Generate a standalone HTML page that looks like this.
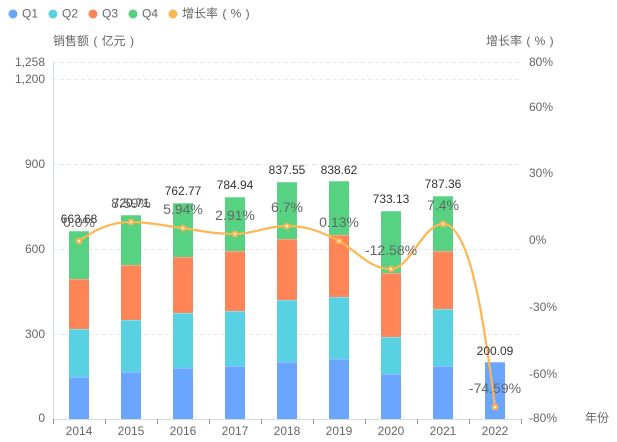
<!DOCTYPE html>
<html>
<head>
<meta charset="utf-8">
<style>
html,body{margin:0;padding:0;background:#fff;width:617px;height:442px;overflow:hidden}
svg{display:block}
text{font-family:"Liberation Sans","Noto Sans CJK SC",sans-serif;font-size:12px;fill:#666;white-space:pre}
.cn{font-family:"Liberation Sans","Noto Sans CJK SC",sans-serif;word-spacing:1px}
.v{fill:#333;text-anchor:middle}
.p{font-size:14px;fill:#666;text-anchor:middle}
.x{text-anchor:middle}
.r{text-anchor:end}
</style>
</head>
<body>
<svg width="617" height="442" viewBox="0 0 617 442" xmlns="http://www.w3.org/2000/svg">
<!-- legend -->
<circle cx="13" cy="14" r="4.5" fill="#6aa5ff"/><text x="22" y="17.5">Q1</text>
<circle cx="53" cy="14" r="4.5" fill="#58d2e2"/><text x="62" y="17.5">Q2</text>
<circle cx="93" cy="14" r="4.5" fill="#ff8559"/><text x="102" y="17.5">Q3</text>
<circle cx="133" cy="14" r="4.5" fill="#57d283"/><text x="142" y="17.5">Q4</text>
<circle cx="173" cy="14" r="4.5" fill="#ffb552"/><text x="182" y="17.5" class="cn">增长率 ( % )</text>
<text x="53" y="45" class="cn">销售额 ( 亿元 )</text>
<text x="486" y="45" class="cn">增长率 ( % )</text>
<!-- grid -->
<g stroke="#e4e6f0" stroke-width="1" stroke-dasharray="4 3" fill="none">
<path d="M53 62.5H520"/><path d="M53 79.5H520"/><path d="M53 164.5H520"/><path d="M53 249.5H520"/><path d="M53 334.5H520"/>
</g>
<!-- y axis -->
<path d="M53.5 62V419" stroke="#d3dedc" stroke-width="1"/>
<path d="M53 419.5H521" stroke="#d3dedc" stroke-width="1"/>
<g stroke="#999" stroke-width="1"><path d="M53.5 419V424M105.5 419V424M157.5 419V424M209.5 419V424M261.5 419V424M313.5 419V424M365.5 419V424M417.5 419V424M469.5 419V424M521.5 419V424"/></g>
<!-- left labels -->
<g class="r">
<text x="45" y="66" class="r">1,258</text>
<text x="45" y="83" class="r">1,200</text>
<text x="45" y="168" class="r">900</text>
<text x="45" y="253" class="r">600</text>
<text x="45" y="338" class="r">300</text>
<text x="45" y="422" class="r">0</text>
</g>
<!-- right labels -->
<text x="529" y="66">80%</text>
<text x="529" y="111">60%</text>
<text x="529" y="177">30%</text>
<text x="529" y="244">0%</text>
<text x="529" y="311">-30%</text>
<text x="529" y="378">-60%</text>
<text x="529" y="422">-80%</text>
<text x="585" y="422" class="cn">年份</text>
<!-- x labels -->
<text x="79" y="435" class="x">2014</text>
<text x="131" y="435" class="x">2015</text>
<text x="183" y="435" class="x">2016</text>
<text x="235" y="435" class="x">2017</text>
<text x="287" y="435" class="x">2018</text>
<text x="339" y="435" class="x">2019</text>
<text x="391" y="435" class="x">2020</text>
<text x="443" y="435" class="x">2021</text>
<text x="495" y="435" class="x">2022</text>
<!-- bars -->
<g>
<rect x="69" y="377" width="20" height="42" fill="#6aa5ff"/><rect x="69" y="329" width="20" height="48" fill="#58d2e2"/><rect x="69" y="279" width="20" height="50" fill="#ff8559"/><rect x="69" y="231" width="20" height="48" fill="#57d283"/>
<rect x="121" y="372" width="20" height="47" fill="#6aa5ff"/><rect x="121" y="320" width="20" height="52" fill="#58d2e2"/><rect x="121" y="265" width="20" height="55" fill="#ff8559"/><rect x="121" y="215" width="20" height="50" fill="#57d283"/>
<rect x="173" y="368" width="20" height="51" fill="#6aa5ff"/><rect x="173" y="313" width="20" height="55" fill="#58d2e2"/><rect x="173" y="257" width="20" height="56" fill="#ff8559"/><rect x="173" y="203" width="20" height="54" fill="#57d283"/>
<rect x="225" y="366" width="20" height="53" fill="#6aa5ff"/><rect x="225" y="311" width="20" height="55" fill="#58d2e2"/><rect x="225" y="251" width="20" height="60" fill="#ff8559"/><rect x="225" y="197" width="20" height="54" fill="#57d283"/>
<rect x="277" y="362" width="20" height="57" fill="#6aa5ff"/><rect x="277" y="300" width="20" height="62" fill="#58d2e2"/><rect x="277" y="239" width="20" height="61" fill="#ff8559"/><rect x="277" y="182" width="20" height="57" fill="#57d283"/>
<rect x="329" y="359" width="20" height="60" fill="#6aa5ff"/><rect x="329" y="297" width="20" height="62" fill="#58d2e2"/><rect x="329" y="235" width="20" height="62" fill="#ff8559"/><rect x="329" y="181" width="20" height="54" fill="#57d283"/>
<rect x="381" y="374" width="20" height="45" fill="#6aa5ff"/><rect x="381" y="337" width="20" height="37" fill="#58d2e2"/><rect x="381" y="273" width="20" height="64" fill="#ff8559"/><rect x="381" y="211" width="20" height="62" fill="#57d283"/>
<rect x="433" y="366" width="20" height="53" fill="#6aa5ff"/><rect x="433" y="309" width="20" height="57" fill="#58d2e2"/><rect x="433" y="251" width="20" height="58" fill="#ff8559"/><rect x="433" y="196" width="20" height="55" fill="#57d283"/>
<rect x="485" y="362" width="20" height="57" fill="#6aa5ff"/>
</g>
<!-- lighter top edges of stacked segments -->
<path fill="none" stroke="#fff" stroke-opacity=".25" stroke-width="1" d="M69 377.5h20M69 329.5h20M69 279.5h20M69 231.5h20M121 372.5h20M121 320.5h20M121 265.5h20M121 215.5h20M173 368.5h20M173 313.5h20M173 257.5h20M173 203.5h20M225 366.5h20M225 311.5h20M225 251.5h20M225 197.5h20M277 362.5h20M277 300.5h20M277 239.5h20M277 182.5h20M329 359.5h20M329 297.5h20M329 235.5h20M329 181.5h20M381 374.5h20M381 337.5h20M381 273.5h20M381 211.5h20M433 366.5h20M433 309.5h20M433 251.5h20M433 196.5h20M485 362.5h20"/>
<!-- line -->
<path d="M79 241C96 229 111 222 131 222C150 222 165 226 183 228C200 231 217 234 235 234C252 234 268 226 287 226C307 226 322 232 339 241C358 252 370 269 391 269C410 269 423 224 443 224C470 224 484 320 495 407" fill="none" stroke="#ffb552" stroke-width="2.2"/>
<g fill="#fff" stroke="#ffb552" stroke-width="2.2">
<circle cx="79" cy="241" r="2.2"/><circle cx="131" cy="222" r="2.2"/><circle cx="183" cy="228" r="2.2"/><circle cx="235" cy="234" r="2.2"/><circle cx="287" cy="226" r="2.2"/><circle cx="339" cy="241" r="2.2"/><circle cx="391" cy="269" r="2.2"/><circle cx="443" cy="224" r="2.2"/><circle cx="495" cy="407" r="2.2"/>
</g>
<!-- value labels -->
<text x="79" y="223" class="v">663.68</text>
<text x="131" y="207" class="v">720.71</text>
<text x="183" y="195" class="v">762.77</text>
<text x="235" y="189" class="v">784.94</text>
<text x="287" y="174" class="v">837.55</text>
<text x="339" y="174" class="v">838.62</text>
<text x="391" y="203" class="v">733.13</text>
<text x="443" y="188" class="v">787.36</text>
<text x="495" y="355" class="v">200.09</text>
<!-- pct labels -->
<text x="79" y="227" class="p">0.0%</text>
<text x="131" y="208" class="p">8.59%</text>
<text x="183" y="214" class="p">5.94%</text>
<text x="235" y="220" class="p">2.91%</text>
<text x="287" y="212" class="p">6.7%</text>
<text x="339" y="227" class="p">0.13%</text>
<text x="391" y="255" class="p">-12.58%</text>
<text x="443" y="210" class="p">7.4%</text>
<text x="495" y="393" class="p">-74.59%</text>
</svg>
</body>
</html>
